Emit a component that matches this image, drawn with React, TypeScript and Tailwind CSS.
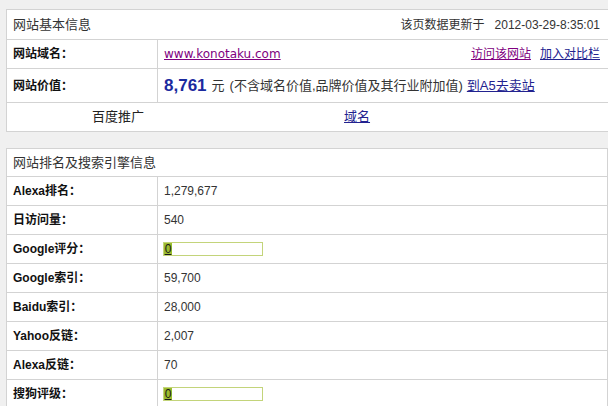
import React from 'react';

const rankRows: { label: string; value?: string; bar?: boolean }[] = [
  { label: 'Alexa排名：', value: '1,279,677' },
  { label: '日访问量：', value: '540' },
  { label: 'Google评分：', bar: true },
  { label: 'Google索引：', value: '59,700' },
  { label: 'Baidu索引：', value: '28,000' },
  { label: 'Yahoo反链：', value: '2,007' },
  { label: 'Alexa反链：', value: '70' },
  { label: '搜狗评级：', bar: true },
];

// Small score meter used for Google / Sogou ratings
const ScoreBar = () => (
  <div className="flex h-[14px] w-[100px] items-stretch border border-[#c3d47a] bg-white">
    <span className="flex w-[8px] items-center justify-center bg-[#9cbc2f] text-[12px] leading-none text-[#1a1a1a] underline">
      0
    </span>
  </div>
);

const App: React.FC = () => {
  return (
    <div className="h-[406px] w-[608px] overflow-hidden bg-[#f0f0f0] pl-[6px] pt-[9px] font-['Liberation_Sans','Noto_Sans_CJK_SC',sans-serif] text-[12px] text-[#333]">
      {/* 网站基本信息 */}
      <div className="w-[606px] border border-[#d3d3d3] bg-white">
        <div className="flex h-[30px] items-center justify-between border-b border-[#d3d3d3] pl-[6px] pr-[11px]">
          <span className="text-[13px] text-[#333]">网站基本信息</span>
          <span className="text-[#333]">
            该页数据更新于&nbsp;&nbsp; 2012-03-29-8:35:01
          </span>
        </div>

        <div className="flex h-[29px] border-b border-[#d3d3d3]">
          <div className="flex w-[151px] items-center border-r border-[#d3d3d3] pl-[6px] font-bold text-[#111]">
            网站域名：
          </div>
          <div className="flex flex-1 items-center justify-between pl-[6px] pr-[11px]">
            <a className="font-['DejaVu_Sans',sans-serif] text-[12px] text-[#800080] underline">www.konotaku.com</a>
            <span className="flex gap-[9px]">
              <a className="text-[#800080] underline">访问该网站</a>
              <a className="text-[#22228f] underline">加入对比栏</a>
            </span>
          </div>
        </div>

        <div className="flex h-[34px] border-b border-[#d3d3d3]">
          <div className="flex w-[151px] items-center border-r border-[#d3d3d3] pl-[6px] font-bold text-[#111]">
            网站价值：
          </div>
          <div className="flex flex-1 items-center pl-[6px]">
            <span className="text-[17px] font-bold text-[#1b2a9e]">8,761</span>
            <span className="ml-[5px] text-[13px]">元</span>
            <span className="ml-[5px] text-[13px]">(不含域名价值,品牌价值及其行业附加值)</span>
            <a className="ml-[4px] text-[13px] text-[#22228f] underline">到A5去卖站</a>
          </div>
        </div>

        <div className="flex h-[28px] items-center">
          <span className="ml-[85px] text-[13px] text-[#222]">百度推广</span>
          <a className="ml-[200px] text-[13px] text-[#22228f] underline">域名</a>
        </div>
      </div>

      {/* 网站排名及搜索引擎信息 */}
      <div className="mt-[16px] w-[602px] border border-[#d3d3d3] bg-white">
        <div className="flex h-[28px] items-center border-b border-[#d3d3d3] pl-[6px]">
          <span className="text-[13px] text-[#333]">网站排名及搜索引擎信息</span>
        </div>
        {rankRows.map((row) => (
          <div key={row.label} className="flex h-[29px] border-b border-[#d3d3d3]">
            <div className="flex w-[151px] items-center border-r border-[#d3d3d3] pl-[6px] font-bold text-[#111]">
              {row.label}
            </div>
            <div className="flex flex-1 items-center pl-[5px] text-[#333]">
              {row.bar ? <ScoreBar /> : <span className="pl-px">{row.value}</span>}
            </div>
          </div>
        ))}
      </div>
    </div>
  );
};

export default App;
